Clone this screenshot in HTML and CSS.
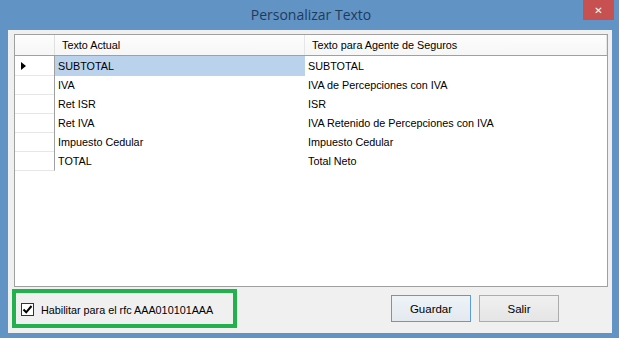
FILE: index.html
```html
<!DOCTYPE html>
<html lang="es">
<head>
    <meta charset="UTF-8">
    <meta name="viewport" content="width=device-width, initial-scale=1.0">
    <title>Personalizar Texto</title>
    <link rel="stylesheet" href="styles.css">
</head>
<body>
    <div class="window">
        <div class="titlebar">
            <span class="title">Personalizar Texto</span>
            <span class="close">&#x2715;</span>
        </div>

        <div class="client">
            <div class="grid">
                <div class="row head">
                    <div class="rh"></div>
                    <div class="cell">Texto Actual</div>
                    <div class="cell">Texto para Agente de Seguros</div>
                </div>
                <div class="row current">
                    <div class="rh"><span class="arrow"></span></div>
                    <div class="cell selected">SUBTOTAL</div>
                    <div class="cell">SUBTOTAL</div>
                </div>
                <div class="row">
                    <div class="rh"></div>
                    <div class="cell">IVA</div>
                    <div class="cell">IVA de Percepciones con IVA</div>
                </div>
                <div class="row">
                    <div class="rh"></div>
                    <div class="cell">Ret ISR</div>
                    <div class="cell">ISR</div>
                </div>
                <div class="row">
                    <div class="rh"></div>
                    <div class="cell">Ret IVA</div>
                    <div class="cell">IVA Retenido de Percepciones con IVA</div>
                </div>
                <div class="row">
                    <div class="rh"></div>
                    <div class="cell">Impuesto Cedular</div>
                    <div class="cell">Impuesto Cedular</div>
                </div>
                <div class="row">
                    <div class="rh"></div>
                    <div class="cell">TOTAL</div>
                    <div class="cell">Total Neto</div>
                </div>
            </div>

            <div class="footer">
                <label class="rfc">
                    <span class="check">
                        <svg width="11" height="11" viewBox="0 0 11 11"><path d="M1.5 5.5 L4.2 8.3 L9.5 2" fill="none" stroke="#000" stroke-width="2"/></svg>
                    </span>
                    Habilitar para el rfc AAA010101AAA
                </label>
                <div class="buttons">
                    <button class="btn default">Guardar</button>
                    <button class="btn">Salir</button>
                </div>
            </div>
        </div>
    </div>
</body>
</html>
```

FILE: styles.css
```css
/* Windows 8 style dialog */
body {
    margin: 0;
    padding: 0;
    width: 619px;
    height: 341px;
    overflow: hidden;
    background-color: #fff;
    font-family: "Liberation Sans", Arial, sans-serif;
    font-size: 10.8px;
    color: #000;
}
.window {
    height: 338px;
    box-sizing: border-box;
    background-color: #6193c5;
    padding: 0 7px 5px 8px;
    display: flex;
    flex-direction: column;
}
.titlebar {
    height: 30px;
    display: flex;
    justify-content: center;
    align-items: center;
    position: relative;
}
.title {
    font-family: "Open Sans", "Noto Sans", sans-serif;
    font-size: 14px;
    color: #1f3b5c;
    margin-top: -2px;
    margin-left: 2px;
}
.close {
    position: absolute;
    top: 0;
    right: -2px;
    width: 31px;
    height: 20px;
    background-color: #c75050;
    color: #fff;
    font-family: "DejaVu Sans", sans-serif;
    font-size: 10px;
    font-weight: bold;
    display: flex;
    justify-content: center;
    align-items: center;
}
.client {
    flex: 1;
    background-color: #f0f0f0;
    display: flex;
    flex-direction: column;
}
.grid {
    margin: 4px 4px 0 6px;
    height: 253px;
    box-sizing: border-box;
    border: 1px solid #a0a0a0;
    background-color: #fff;
}
.row {
    display: grid;
    grid-template-columns: 40px 250px 1fr;
    height: 19px;
}
.row .cell {
    padding: 1px 0 0 3px;
    line-height: 19px;
    white-space: nowrap;
}
.row .rh {
    box-sizing: border-box;
    border-right: 1px solid #a0a0a0;
    border-bottom: 1px solid #e6e6e6;
    display: flex;
    align-items: center;
    padding-left: 6px;
}
.row.head {
    height: 21px;
    border-bottom: 1px solid #a0a0a0;
    background: linear-gradient(#fdfdfd, #f6f6f6);
    box-sizing: border-box;
}
.row.head .cell {
    padding: 0 0 0 7px;
    line-height: 20px;
    border-right: 1px solid #e6e6e6;
}
.row.head .rh {
    border-right: 1px solid #e0e0e0;
    border-bottom: none;
}
.selected {
    background-color: #bad2ec;
}
.arrow {
    width: 0;
    height: 0;
    border-top: 4px solid transparent;
    border-bottom: 4px solid transparent;
    border-left: 5px solid #000;
}
.footer {
    display: flex;
    padding: 2px 0 0 4px;
}
.rfc {
    width: 225px;
    height: 39px;
    box-sizing: border-box;
    border: 4px solid #22b14c;
    display: flex;
    align-items: center;
    padding: 2px 0 0 5px;
    gap: 7px;
}
.check {
    width: 13px;
    height: 13px;
    box-sizing: border-box;
    border: 1px solid #333;
    background-color: #fff;
    display: flex;
    justify-content: center;
    align-items: center;
}
.buttons {
    margin-left: auto;
    margin-right: 53px;
    margin-top: 6px;
    display: flex;
    gap: 8px;
}
.btn {
    width: 80px;
    height: 27px;
    font-family: "Liberation Sans", Arial, sans-serif;
    font-size: 11.5px;
    color: #000;
    border: 1px solid #acacac;
    background: linear-gradient(#f0f0f0, #e5e5e5);
    padding: 0;
}
.btn.default {
    border-color: #5a9bd8;
    background: linear-gradient(#eef3f8, #e3e9ef);
}
```
